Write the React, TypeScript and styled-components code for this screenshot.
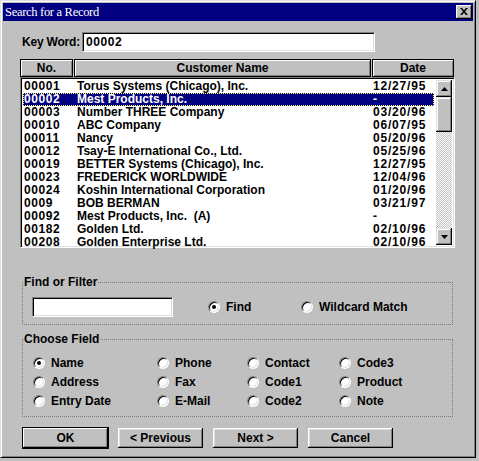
import React from 'react';
import styled, { createGlobalStyle } from 'styled-components';

const Global = createGlobalStyle`
  html, body { margin: 0; padding: 0; background: #c0c0c0; }
  body { font-family: "Liberation Sans", Arial, sans-serif; font-size: 12px; font-weight: bold; color: #000; }
  * { box-sizing: border-box; }
`;

const Window = styled.div`
  width: 476px;
  border: 1px solid;
  border-color: #dfdfdf #000 #000 #dfdfdf;
  box-shadow: inset 1px 1px #fff, inset -1px -1px #808080;
  padding: 2px;
  background: #c0c0c0;
  display: flex;
  flex-direction: column;
`;

const TitleBar = styled.div`
  height: 18px;
  background: #000080;
  display: flex;
  align-items: center;
  justify-content: space-between;
  padding: 0 1px 0 2px;
`;

const Title = styled.span`
  font-family: "Liberation Serif", "Times New Roman", serif;
  font-weight: normal;
  font-size: 12.5px;
  letter-spacing: -0.3px;
  color: #fff;
`;

const CloseButton = styled.div`
  width: 16px;
  height: 14px;
  background: #c0c0c0;
  box-shadow: inset -1px -1px #000, inset 1px 1px #fff, inset -2px -2px #808080;
  display: flex;
  align-items: center;
  justify-content: center;
  padding: 0 1px 1px 0;
`;

const Body = styled.div`
  padding: 11px 17px 6px 17px;
  display: flex;
  flex-direction: column;
`;

const KeyRow = styled.div`
  display: flex;
  align-items: center;
  gap: 2px;
  margin-left: 2px;
`;

const Label = styled.span`
  font-size: 12px;
  font-weight: bold;
  letter-spacing: -0.2px;
`;

const Field = styled.input<{ $w: number }>`
  width: ${p => p.$w}px;
  height: 20px;
  border: 1px solid;
  border-color: #808080 #fff #fff #808080;
  box-shadow: inset 1px 1px #000, inset -1px -1px #dfdfdf;
  background: #fff;
  font-family: "Liberation Sans", Arial, sans-serif;
  font-weight: bold;
  font-size: 12px;
  letter-spacing: 0.6px;
  padding: 0 3px;
  outline: none;
  margin: 0;
  color: #000;
`;

const Header = styled.div`
  margin-top: 7px;
  display: flex;
  gap: 1px;
  height: 18px;
`;

const HeaderCell = styled.div<{ $w: number }>`
  width: ${p => p.$w}px;
  height: 18px;
  border: 1px solid #000;
  box-shadow: inset 1px 1px #fff, inset -1px -1px #808080;
  background: #c0c0c0;
  display: flex;
  align-items: center;
  justify-content: center;
  font-size: 12px;
`;

const ListBox = styled.div`
  width: 435px;
  height: 171px;
  border: 1px solid;
  border-color: #808080 #fff #fff #808080;
  box-shadow: inset 1px 1px #000, inset -1px -1px #dfdfdf;
  padding: 2px;
  background: #fff;
  display: flex;
`;

const Rows = styled.div`
  flex: 1;
  display: flex;
  flex-direction: column;
`;

const Row = styled.div<{ $sel?: boolean }>`
  display: grid;
  grid-template-columns: 52px 298px 1fr;
  height: 13px;
  line-height: 13px;
  font-size: 12px;
  margin-right: 2px;
  background: ${p => (p.$sel ? '#000080' : 'transparent')};
  color: ${p => (p.$sel ? '#fff' : '#000')};
  outline: ${p => (p.$sel ? '1px dotted #ffff60' : 'none')};
  outline-offset: -1px;
  white-space: pre;
`;

const NumCell = styled.span`
  padding-left: 1px;
  letter-spacing: 0.6px;
`;

const NameCell = styled.span`
  padding-left: 2px;
`;

const DateCell = styled.span`
  letter-spacing: 0.8px;
`;

const ScrollBar = styled.div`
  width: 16px;
  display: flex;
  flex-direction: column;
  background-color: #fff;
  background-image: conic-gradient(#c0c0c0 25%, #fff 0 50%, #c0c0c0 0 75%, #fff 0);
  background-size: 2px 2px;
`;

const Raised = styled.div<{ $h: number }>`
  width: 16px;
  height: ${p => p.$h}px;
  background: #c0c0c0;
  box-shadow: inset -1px -1px #000, inset 1px 1px #dfdfdf, inset -2px -2px #808080, inset 2px 2px #fff;
  display: flex;
  align-items: center;
  justify-content: center;
`;

const Spacer = styled.div`
  flex: 1;
`;

const Group = styled.fieldset<{ $mt: number }>`
  margin: ${p => p.$mt}px 0 0 2px;
  width: 431px;
  min-width: 0;
  border: 1px dotted #7a7a7a;
  padding: 0;
`;

const Legend = styled.legend`
  font-size: 12px;
  line-height: 14px;
  padding: 0 1px 0 0;
  margin-left: 1px;
`;

const FindRow = styled.div`
  display: grid;
  grid-template-columns: 176px 93px 1fr;
  align-items: center;
  padding: 8px 0 7px 9px;
`;

const FieldGrid = styled.div`
  display: grid;
  grid-template-columns: 124px 90px 92px 1fr;
  grid-auto-rows: 19px;
  align-items: center;
  padding: 7px 0 6px 10px;
`;

const RadioOption = styled.label`
  display: flex;
  align-items: center;
  gap: 6px;
  font-size: 12px;
  white-space: nowrap;
`;

const RadioCircle = styled.span<{ $on?: boolean }>`
  width: 12px;
  height: 12px;
  border-radius: 50%;
  border: 1px solid;
  border-color: #808080 #fff #fff #808080;
  box-shadow: inset 1px 1px #000, inset -1px -1px #dfdfdf;
  background: #fff;
  display: flex;
  align-items: center;
  justify-content: center;
  flex: none;
  &::after {
    content: '';
    width: 4px;
    height: 4px;
    border-radius: 50%;
    background: ${p => (p.$on ? '#000' : 'transparent')};
  }
`;

const ButtonRow = styled.div`
  display: flex;
  gap: 8px;
  margin: 10px 0 0 2px;
`;

const Button = styled.div<{ $default?: boolean }>`
  width: 87px;
  height: 22px;
  background: #c0c0c0;
  border: 1px solid ${p => (p.$default ? '#000' : 'transparent')};
  box-shadow: ${p =>
    p.$default
      ? 'inset -1px -1px #000, inset 1px 1px #fff, inset -2px -2px #808080'
      : 'inset -1px -1px #000, inset 1px 1px #fff, inset -2px -2px #808080, inset 2px 2px #dfdfdf'};
  display: flex;
  align-items: center;
  justify-content: center;
  font-size: 12px;
`;

const rows: [string, string, string][] = [
  ['00001', 'Torus Systems (Chicago), Inc.', '12/27/95'],
  ['00002', 'Mest Products, Inc.', '-'],
  ['00003', 'Number THREE Company', '03/20/96'],
  ['00010', 'ABC Company', '06/07/95'],
  ['00011', 'Nancy', '05/20/96'],
  ['00012', 'Tsay-E International Co., Ltd.', '05/25/96'],
  ['00019', 'BETTER Systems (Chicago), Inc.', '12/27/95'],
  ['00023', 'FREDERICK WORLDWIDE', '12/04/96'],
  ['00024', 'Koshin International Corporation', '01/20/96'],
  ['0009', 'BOB BERMAN', '03/21/97'],
  ['00092', 'Mest Products, Inc.  (A)', '-'],
  ['00182', 'Golden Ltd.', '02/10/96'],
  ['00208', 'Golden Enterprise Ltd.', '02/10/96'],
];

const fields = [
  'Name', 'Phone', 'Contact', 'Code3',
  'Address', 'Fax', 'Code1', 'Product',
  'Entry Date', 'E-Mail', 'Code2', 'Note',
];

const Radio = ({ label, on }: { label: string; on?: boolean }) => (
  <RadioOption>
    <RadioCircle $on={on} />
    {label}
  </RadioOption>
);

const Arrow = ({ up }: { up?: boolean }) => (
  <svg width="7" height="4" viewBox="0 0 7 4">
    {up ? <path d="M3.5 0L7 4H0z" fill="#000" /> : <path d="M0 0h7L3.5 4z" fill="#000" />}
  </svg>
);

export default function App() {
  return (
    <>
      <Global />
      <Window>
        <TitleBar>
          <Title>Search for a Record</Title>
          <CloseButton>
            <svg width="8" height="7" viewBox="0 0 8 7">
              <path d="M0 0h2l2 2.2L6 0h2L5 3.5 8 7H6L4 4.8 2 7H0l3-3.5z" fill="#000" />
            </svg>
          </CloseButton>
        </TitleBar>
        <Body>
          <KeyRow>
            <Label>Key Word:</Label>
            <Field $w={293} defaultValue="00002" readOnly />
          </KeyRow>
          <Header>
            <HeaderCell $w={53}>No.</HeaderCell>
            <HeaderCell $w={297}>Customer Name</HeaderCell>
            <HeaderCell $w={82}>Date</HeaderCell>
          </Header>
          <ListBox>
            <Rows>
              {rows.map(([no, name, date], i) => (
                <Row key={no + i} $sel={i === 1}>
                  <NumCell>{no}</NumCell>
                  <NameCell>{name}</NameCell>
                  <DateCell>{date}</DateCell>
                </Row>
              ))}
            </Rows>
            <ScrollBar>
              <Raised $h={17}><Arrow up /></Raised>
              <Raised $h={35} />
              <Spacer />
              <Raised $h={17}><Arrow /></Raised>
            </ScrollBar>
          </ListBox>
          <Group $mt={27}>
            <Legend>Find or Filter</Legend>
            <FindRow>
              <Field $w={141} defaultValue="" readOnly />
              <Radio label="Find" on />
              <Radio label="Wildcard Match" />
            </FindRow>
          </Group>
          <Group $mt={7}>
            <Legend>Choose Field</Legend>
            <FieldGrid>
              {fields.map((f, i) => (
                <Radio key={f} label={f} on={i === 0} />
              ))}
            </FieldGrid>
          </Group>
          <ButtonRow>
            <Button $default>OK</Button>
            <Button>&lt; Previous</Button>
            <Button>Next &gt;</Button>
            <Button>Cancel</Button>
          </ButtonRow>
        </Body>
      </Window>
    </>
  );
}
